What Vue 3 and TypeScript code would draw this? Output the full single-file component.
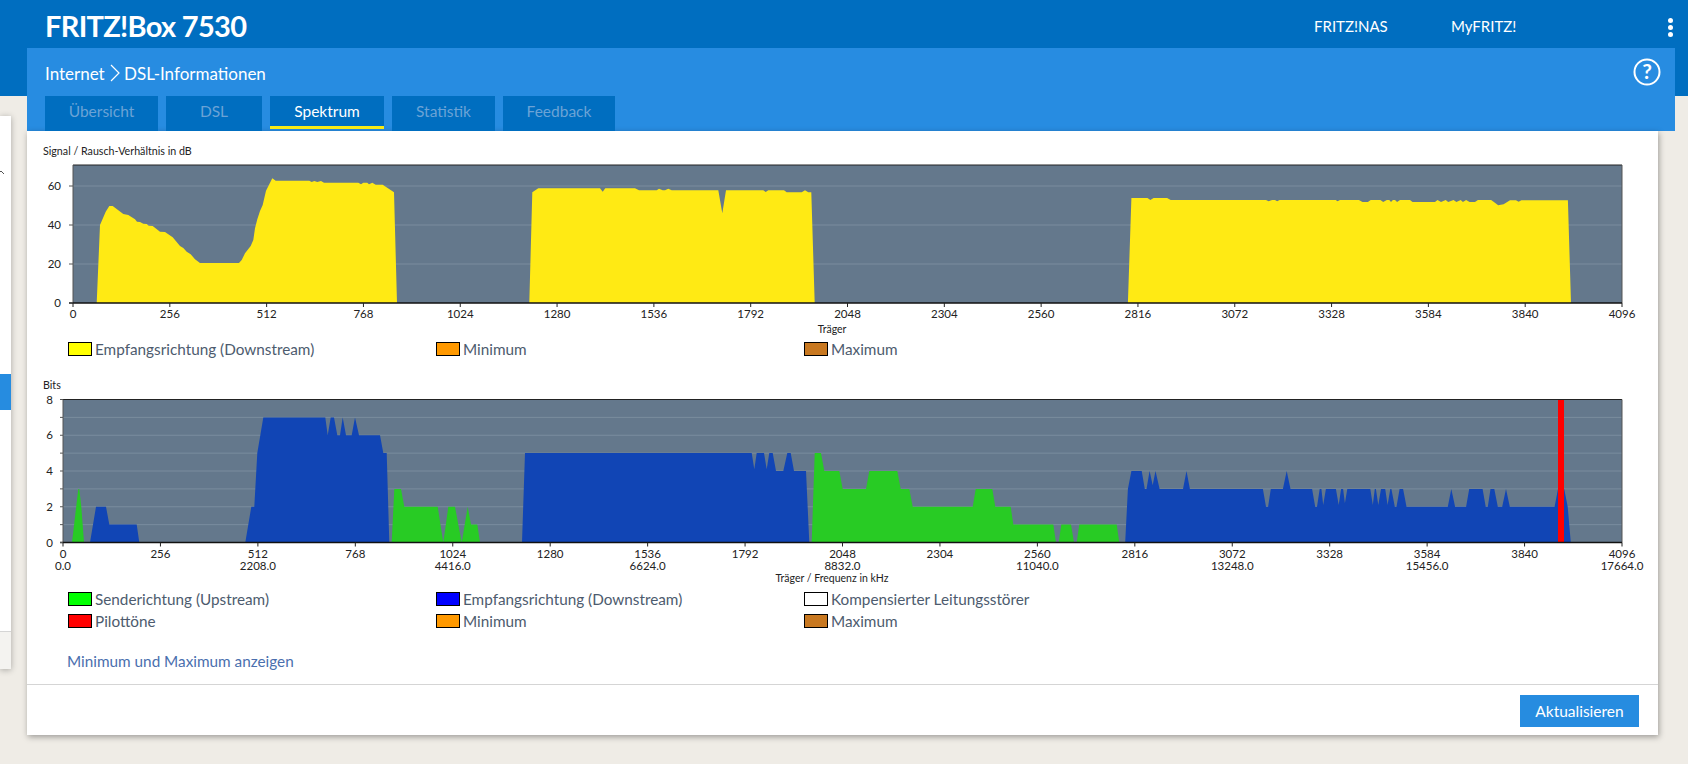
<script setup lang="ts">
type Pt = [number, number]

const tabs = [
  { label: 'Übersicht', w: 113 },
  { label: 'DSL', w: 96 },
  { label: 'Spektrum', w: 114, active: true },
  { label: 'Statistik', w: 103 },
  { label: 'Feedback', w: 112 },
]

// Chart geometry, in page pixels (each svg's viewBox is aligned with the page)
const snrPlot = { l: 73, r: 1622, t: 165, b: 303 }
const bitsPlot = { l: 63, r: 1622, t: 399.5, b: 542.5 }
const bitStep = (bitsPlot.b - bitsPlot.t) / 8

const carriers = [0, 256, 512, 768, 1024, 1280, 1536, 1792, 2048, 2304, 2560, 2816, 3072, 3328, 3584, 3840, 4096]
const tickX = (p: { l: number; r: number }, c: number) => p.l + ((p.r - p.l) * c) / 4096
const snrY = [60, 40, 20, 0].map((v) => ({ v, y: snrPlot.b - (v * 39) / 20 }))
const bitsY = [8, 7, 6, 5, 4, 3, 2, 1, 0].map((v) => ({ v, y: bitsPlot.b - v * bitStep }))

const snrBlocks: string[] = [
  '96.7,303 100,225 105.7,211.7 109.3,206 112.7,206 123.3,214 128.3,215 135,219.3 137,221.7 140,222 143.3,223.7 146.7,224 148.7,225.7 152.7,226 160,231.7 165,232 172.7,237.3 180,246 183.3,248 186.7,251.7 190.7,254.3 195,259.3 200,263 239,263 241.7,260 245,253.3 250.7,246 253.3,240 255,228.3 257.3,219.3 260,211 262.7,205 266,190.7 272.3,178.3 275.7,180.7 309.3,180.7 311.7,182 314.3,181 317.3,182 321,181 324,182.7 358.3,182.7 361,184.3 363.3,182.7 367.3,182.7 369,184.3 372.3,182.7 375.7,184.7 382.7,184.7 394,192.3 397,303',
  '529.3,303 532.3,192.3 538.3,188.3 600,188.3 602.7,191.7 605.3,188.3 635,188.3 639,190.3 656.7,190.3 659,188.7 662.7,190.3 665,190.3 668.3,188.7 671.7,190.3 718.3,190.3 722.3,213.3 726,190.3 763.3,190.3 765.7,192 768.3,190.3 784,190.3 786.7,192.3 801.7,192.3 805,190.3 808.3,192.3 811.3,192.3 814.7,303',
  '1127.9,303 1131.4,198 1147.5,198 1150.4,200 1153.6,198 1167.1,198 1170.7,200 1266,200 1268.6,201.3 1272.1,200 1275,200 1277.1,201.3 1279.6,200 1335.7,200 1337.5,201.3 1340,200 1358.9,200 1362.5,202 1367.9,202 1370.7,200 1380.4,200 1383.2,202 1386.8,200 1389.3,200 1391,202 1392.9,200 1395,200 1397.1,202 1400,200 1410,200 1412.5,202 1435,202 1437.5,200 1441,202 1445.7,200 1448.2,202 1453.6,200 1456.4,202 1460.7,200 1462.9,202 1466.1,200 1469.6,202 1475,202 1477.9,200 1491.1,200 1493.9,202 1498.2,205.3 1503.6,204.3 1510,200.3 1516,200.3 1518.6,201.7 1521.4,200.3 1567.9,200.3 1571,303',
]

const toPoints = (pts: Pt[]) => pts.map(([x, bits]) => `${x},${(bitsPlot.b - bits * bitStep).toFixed(1)}`).join(' ')

const upstream: Pt[][] = [
  [[72, 0], [78.3, 3], [79.3, 3], [81.3, 2], [84, 0]],
  [[391.7, 0], [394.3, 3], [401, 3], [404.3, 2], [437.7, 2], [443.3, 0], [448.3, 2], [455, 2], [461.7, 0], [467.7, 2], [471, 1], [477.3, 1], [480, 0]],
  [[811.7, 0], [814.7, 5], [821, 5], [824.3, 4], [839.3, 4], [842.7, 3], [866, 3], [869.3, 4], [897.3, 4], [900.7, 3], [909.3, 3], [912.7, 2], [972.7, 2], [975.7, 3], [992.3, 3], [995.3, 2], [1010.7, 2], [1013.3, 1], [1053.3, 1], [1056, 0]],
  [[1058.7, 0], [1061.3, 1], [1071, 1], [1074, 0]],
  [[1076.7, 0], [1079.3, 1], [1116.7, 1], [1119.3, 0]],
]

const downstream: Pt[][] = [
  [[90, 0], [96, 2], [106, 2], [109.3, 1], [136.7, 1], [139.3, 0]],
  [[245.3, 0], [251.3, 2], [254.3, 2], [257.3, 5], [263.3, 7], [325.3, 7], [327.7, 6], [330.7, 7], [334, 7], [337.3, 6], [340, 6], [342.7, 7], [346, 6], [351.7, 6], [355, 7], [359, 6], [380, 6], [383.3, 5], [386.7, 5], [389.3, 0]],
  [[522, 0], [525, 5], [751.7, 5], [754.3, 4.1], [756.7, 5], [764, 5], [766.7, 4.1], [769.3, 5], [772.7, 5], [776, 4], [783.3, 4], [787.3, 5], [790.7, 5], [794, 4], [806, 4], [809.3, 0]],
  [[1125.2, 0], [1127.9, 3], [1131.4, 4], [1141.7, 4], [1144.8, 3], [1146.5, 3], [1149.6, 4], [1152.7, 3.2], [1155.5, 4], [1159.6, 3], [1183, 3], [1186.5, 4], [1189.9, 3], [1262.9, 3], [1266, 2], [1268.1, 2], [1270.8, 3], [1282.9, 3], [1286.7, 4], [1290.5, 3], [1312.1, 3], [1315.2, 2], [1317, 2], [1319.7, 3], [1321.4, 3], [1323.2, 2.1], [1325.9, 3], [1335.9, 3], [1338.7, 2.1], [1341.1, 3], [1343.1, 3], [1344.9, 2.2], [1347.3, 3], [1370.3, 3], [1372.8, 2.1], [1374.8, 3], [1375.9, 3], [1378.3, 2.1], [1381, 3], [1385.2, 3], [1387.6, 2.1], [1390.3, 3], [1391.4, 3], [1394.8, 2], [1396.5, 2], [1399.6, 3], [1403.1, 3], [1406.5, 2], [1447.8, 2], [1451.3, 3], [1455.1, 2], [1466.1, 2], [1469.2, 3], [1482.6, 3], [1485.7, 2], [1487.8, 2], [1490.5, 3], [1494.3, 3], [1497.8, 2], [1502.2, 2], [1506, 3], [1509.8, 2], [1554.6, 2], [1558, 3], [1564.2, 3], [1567.7, 2], [1570.8, 0]],
]

const upPolys = upstream.map(toPoints)
const downPolys = downstream.map(toPoints)

const legendTop = [
  { label: 'Empfangsrichtung (Downstream)', color: '#ffff00' },
  { label: 'Minimum', color: '#ff9900' },
  { label: 'Maximum', color: '#c87820' },
]
const legendBottom = [
  { label: 'Senderichtung (Upstream)', color: '#00ff00' },
  { label: 'Empfangsrichtung (Downstream)', color: '#0000ff' },
  { label: 'Kompensierter Leitungsstörer', color: '#ffffff' },
  { label: 'Pilottöne', color: '#ff0000' },
  { label: 'Minimum', color: '#ff9900' },
  { label: 'Maximum', color: '#c87820' },
]
</script>

<template>
  <div class="page">
    <header class="top">
      <div class="brand">FRITZ!Box 7530</div>
      <nav class="top-links">
        <span class="nas">FRITZ!NAS</span>
        <span class="my">MyFRITZ!</span>
      </nav>
      <div class="dots"><i></i><i></i><i></i></div>
    </header>

    <div class="shell">
      <aside class="side">
        <svg class="side-caret" width="6" height="6" viewBox="0 0 6 6"><path d="M-2 5 L1 2 L4 5" fill="none" stroke="#555" stroke-width="1" /></svg>
        <div class="side-active"></div>
        <div class="side-foot"></div>
      </aside>

      <main class="main">
        <section class="sub">
          <div class="crumb-row">
            <div class="crumb">
              <span class="crumb-a">Internet</span>
              <svg class="crumb-sep" width="10" height="18" viewBox="0 0 10 18"><path d="M1 1 L9 9 L1 17" fill="none" stroke="#fff" stroke-width="1.2" /></svg>
              <span>DSL-Informationen</span>
            </div>
            <svg class="help" width="28" height="28" viewBox="0 0 28 28">
              <circle cx="14" cy="14" r="12.5" fill="none" stroke="#fff" stroke-width="2" />
              <text x="14" y="20.5" text-anchor="middle" class="help-q">?</text>
            </svg>
          </div>
          <div class="tabs">
            <div v-for="t in tabs" :key="t.label" class="tab" :class="{ active: t.active }" :style="{ width: t.w + 'px' }">{{ t.label }}</div>
          </div>
        </section>

        <section class="card">
          <div class="card-body">
            <div class="chart-title first">Signal / Rausch-Verhältnis in dB</div>
            <svg class="chart" width="1631" height="178" viewBox="27 158 1631 178">
              <rect :x="snrPlot.l" :y="snrPlot.t" :width="snrPlot.r - snrPlot.l" :height="snrPlot.b - snrPlot.t" fill="#64788c" />
              <line v-for="g in snrY.slice(0, 3)" :key="g.v" :x1="snrPlot.l" :x2="snrPlot.r" :y1="g.y" :y2="g.y" stroke="#7a8c9e" />
              <polygon v-for="(p, i) in snrBlocks" :key="i" :points="p" fill="#ffea14" />
              <line :x1="snrPlot.l" :x2="snrPlot.r" :y1="snrPlot.t" :y2="snrPlot.t" stroke="#222" />
              <line :x1="snrPlot.l" :x2="snrPlot.l" :y1="snrPlot.t" :y2="snrPlot.b" stroke="#555" />
              <line :x1="snrPlot.r" :x2="snrPlot.r" :y1="snrPlot.t" :y2="snrPlot.b" stroke="#555" />
              <line :x1="snrPlot.l - 4" :x2="snrPlot.r" :y1="snrPlot.b" :y2="snrPlot.b" stroke="#111" stroke-width="1.5" />
              <g v-for="g in snrY" :key="'y' + g.v">
                <line :x1="snrPlot.l - 4" :x2="snrPlot.l" :y1="g.y" :y2="g.y" stroke="#555" />
                <text :x="snrPlot.l - 12" :y="g.y + 4" text-anchor="end" class="tick">{{ g.v }}</text>
              </g>
              <g v-for="c in carriers" :key="'x' + c">
                <line :x1="tickX(snrPlot, c)" :x2="tickX(snrPlot, c)" :y1="snrPlot.b" :y2="snrPlot.b + 4" stroke="#222" />
                <text :x="tickX(snrPlot, c)" y="318" text-anchor="middle" class="tick">{{ c }}</text>
              </g>
              <text x="832" y="333" text-anchor="middle" class="tick small">Träger</text>
            </svg>
            <div class="legend">
              <div v-for="l in legendTop" :key="l.label" class="legend-item">
                <span class="swatch" :style="{ background: l.color }"></span>{{ l.label }}
              </div>
            </div>

            <div class="chart-title second">Bits</div>
            <svg class="chart" width="1631" height="194" viewBox="27 392 1631 194">
              <rect :x="bitsPlot.l" :y="bitsPlot.t" :width="bitsPlot.r - bitsPlot.l" :height="bitsPlot.b - bitsPlot.t" fill="#64788c" />
              <line v-for="g in bitsY.slice(1, 8)" :key="g.v" :x1="bitsPlot.l" :x2="bitsPlot.r" :y1="g.y" :y2="g.y" stroke="#7a8c9e" />
              <polygon v-for="(p, i) in upPolys" :key="'u' + i" :points="p" fill="#28cb24" />
              <polygon v-for="(p, i) in downPolys" :key="'d' + i" :points="p" fill="#1145b5" />
              <rect x="1558" :y="bitsPlot.t" width="6" :height="bitsPlot.b - bitsPlot.t" fill="#ff0000" />
              <line :x1="bitsPlot.l" :x2="bitsPlot.r" :y1="bitsPlot.t" :y2="bitsPlot.t" stroke="#222" />
              <line :x1="bitsPlot.l" :x2="bitsPlot.l" :y1="bitsPlot.t" :y2="bitsPlot.b" stroke="#555" />
              <line :x1="bitsPlot.r" :x2="bitsPlot.r" :y1="bitsPlot.t" :y2="bitsPlot.b" stroke="#555" />
              <line :x1="bitsPlot.l - 3" :x2="bitsPlot.r" :y1="bitsPlot.b" :y2="bitsPlot.b" stroke="#111" stroke-width="1.5" />
              <line v-for="g in bitsY" :key="'t' + g.v" :x1="bitsPlot.l - 3" :x2="bitsPlot.l" :y1="g.y" :y2="g.y" stroke="#555" />
              <text v-for="g in bitsY.filter((b) => b.v % 2 === 0)" :key="'l' + g.v" :x="bitsPlot.l - 10" :y="g.y + 4" text-anchor="end" class="tick">{{ g.v }}</text>
              <g v-for="c in carriers" :key="'x' + c">
                <line :x1="tickX(bitsPlot, c)" :x2="tickX(bitsPlot, c)" :y1="bitsPlot.b" :y2="bitsPlot.b + 4" stroke="#222" />
                <text :x="tickX(bitsPlot, c)" y="558" text-anchor="middle" class="tick">{{ c }}</text>
                <text v-if="c % 512 === 0" :x="tickX(bitsPlot, c)" y="570" text-anchor="middle" class="tick">{{ (c * 4.3125).toFixed(1) }}</text>
              </g>
              <text x="832" y="582" text-anchor="middle" class="tick small">Träger / Frequenz in kHz</text>
            </svg>
            <div class="legend">
              <div v-for="l in legendBottom" :key="l.label + l.color" class="legend-item">
                <span class="swatch" :style="{ background: l.color }"></span>{{ l.label }}
              </div>
            </div>

            <a class="toggle">Minimum und Maximum anzeigen</a>
          </div>
          <footer class="actions">
            <button class="btn" type="button">Aktualisieren</button>
          </footer>
        </section>
      </main>

      <div class="scroll">
        <svg width="13" height="10" viewBox="0 0 13 10"><path d="M2 2 L6.5 7 L11 2" fill="none" stroke="#c8c8c8" stroke-width="2" /></svg>
      </div>
    </div>
  </div>
</template>

<style>
html, body { margin: 0; overflow: hidden; }
</style>

<style scoped>
.page {
  width: 1688px;
  height: 764px;
  overflow: hidden;
  font-family: "Lato", "Noto Sans", sans-serif;
  background: #efece6;
}
.top {
  height: 48px;
  background: #006ec0;
  display: flex;
  align-items: center;
  color: #fff;
}
.brand {
  margin-left: 45px;
  font-size: 29px;
  font-weight: 700;
  letter-spacing: -0.7px;
  line-height: 48px;
  margin-top: 3px;
  width: 1269px;
}
.top-links { display: flex; font-size: 15px; margin-top: 3px; }
.nas { width: 137px; }
.my { width: 64px; }
.dots {
  margin-left: 153px;
  display: flex;
  flex-direction: column;
  gap: 2px;
  margin-top: 6px;
}
.dots i { display: block; width: 5px; height: 5px; border-radius: 50%; background: #fff; }
.shell {
  display: flex;
  height: 716px;
  background: linear-gradient(#006ec0 48px, #efece6 48px);
}
.side {
  width: 11px;
  height: 553px;
  margin-top: 68px;
  background: #fff;
  box-shadow: 0 1px 6px rgba(0, 0, 0, 0.3);
  display: flex;
  flex-direction: column;
  flex: none;
}
.side-caret { display: block; margin-top: 53px; flex: none; }
.side-active { height: 36px; margin-top: 199px; background: #268ce0; flex: none; }
.side-foot {
  margin-top: 221px;
  flex: 1;
  border-top: 1px solid #d5d5d5;
  background: #f4f3f0;
}
.main { margin-left: 16px; width: 1648px; flex: none; }
.sub {
  height: 83px;
  background: #278ce1;
  color: #fff;
  padding-left: 18px;
  box-sizing: border-box;
}
.crumb-row { height: 48px; display: flex; align-items: center; justify-content: space-between; }
.crumb { display: flex; align-items: center; font-size: 17px; margin-top: 2px; }
.crumb-a { width: 65px; }
.crumb-sep { margin-right: 4px; }
.help { margin-right: 14px; margin-top: 0; }
.help-q { font-size: 21px; font-weight: 700; fill: #fff; font-family: "Lato", sans-serif; }
.tabs { display: flex; gap: 8px; }
.tab {
  height: 35px;
  background: #006ec0;
  color: #6ba3d6;
  font-size: 15.5px;
  line-height: 31px;
  text-align: center;
  box-sizing: border-box;
}
.tab.active {
  height: 33px;
  color: #fff;
  border-bottom: 3px solid #f6ea16;
}
.card {
  width: 1631px;
  height: 604px;
  background: #fff;
  box-shadow: 1px 2px 6px rgba(0, 0, 0, 0.35);
  display: flex;
  flex-direction: column;
}
.card-body { height: 553px; overflow: hidden; }
.chart-title { font-size: 10.7px; line-height: 14px; color: #222; padding-left: 16px; }
.chart-title.first { margin-top: 13px; }
.chart-title.second { margin-top: 19px; }
.chart { display: block; }
.tick { font-size: 11.5px; fill: #222; font-family: "Lato", "Noto Sans", sans-serif; }
.tick.small { font-size: 10.5px; }
.legend {
  display: grid;
  grid-template-columns: 368px 368px 368px;
  row-gap: 2px;
  padding-left: 41px;
  margin-top: 3px;
}
.legend-item {
  display: flex;
  align-items: center;
  height: 20px;
  font-size: 15.3px;
  color: #4d5b6e;
}
.swatch {
  width: 22px;
  height: 12px;
  border: 1px solid #000;
  margin-right: 3px;
  flex: none;
}
.toggle {
  display: block;
  margin: 20px 0 0 40px;
  font-size: 15.3px;
  line-height: 20px;
  color: #4a6fae;
}
.actions {
  flex: 1;
  border-top: 1px solid #d5d5d5;
  display: flex;
  justify-content: flex-end;
  align-items: flex-start;
  padding: 10px 19px 0 0;
}
.btn {
  width: 119px;
  height: 32px;
  border: 0;
  background: #268ce0;
  color: #fff;
  font-family: inherit;
  font-size: 15.5px;
  padding: 0;
}
.scroll {
  margin-left: 17px;
  margin-top: 48px;
  width: 13px;
  flex: none;
  height: 656px;
  background: #eeeeee;
  border-left: 1px solid #fff;
  display: flex;
  align-items: flex-end;
  padding-bottom: 4px;
  box-sizing: border-box;
}
</style>
